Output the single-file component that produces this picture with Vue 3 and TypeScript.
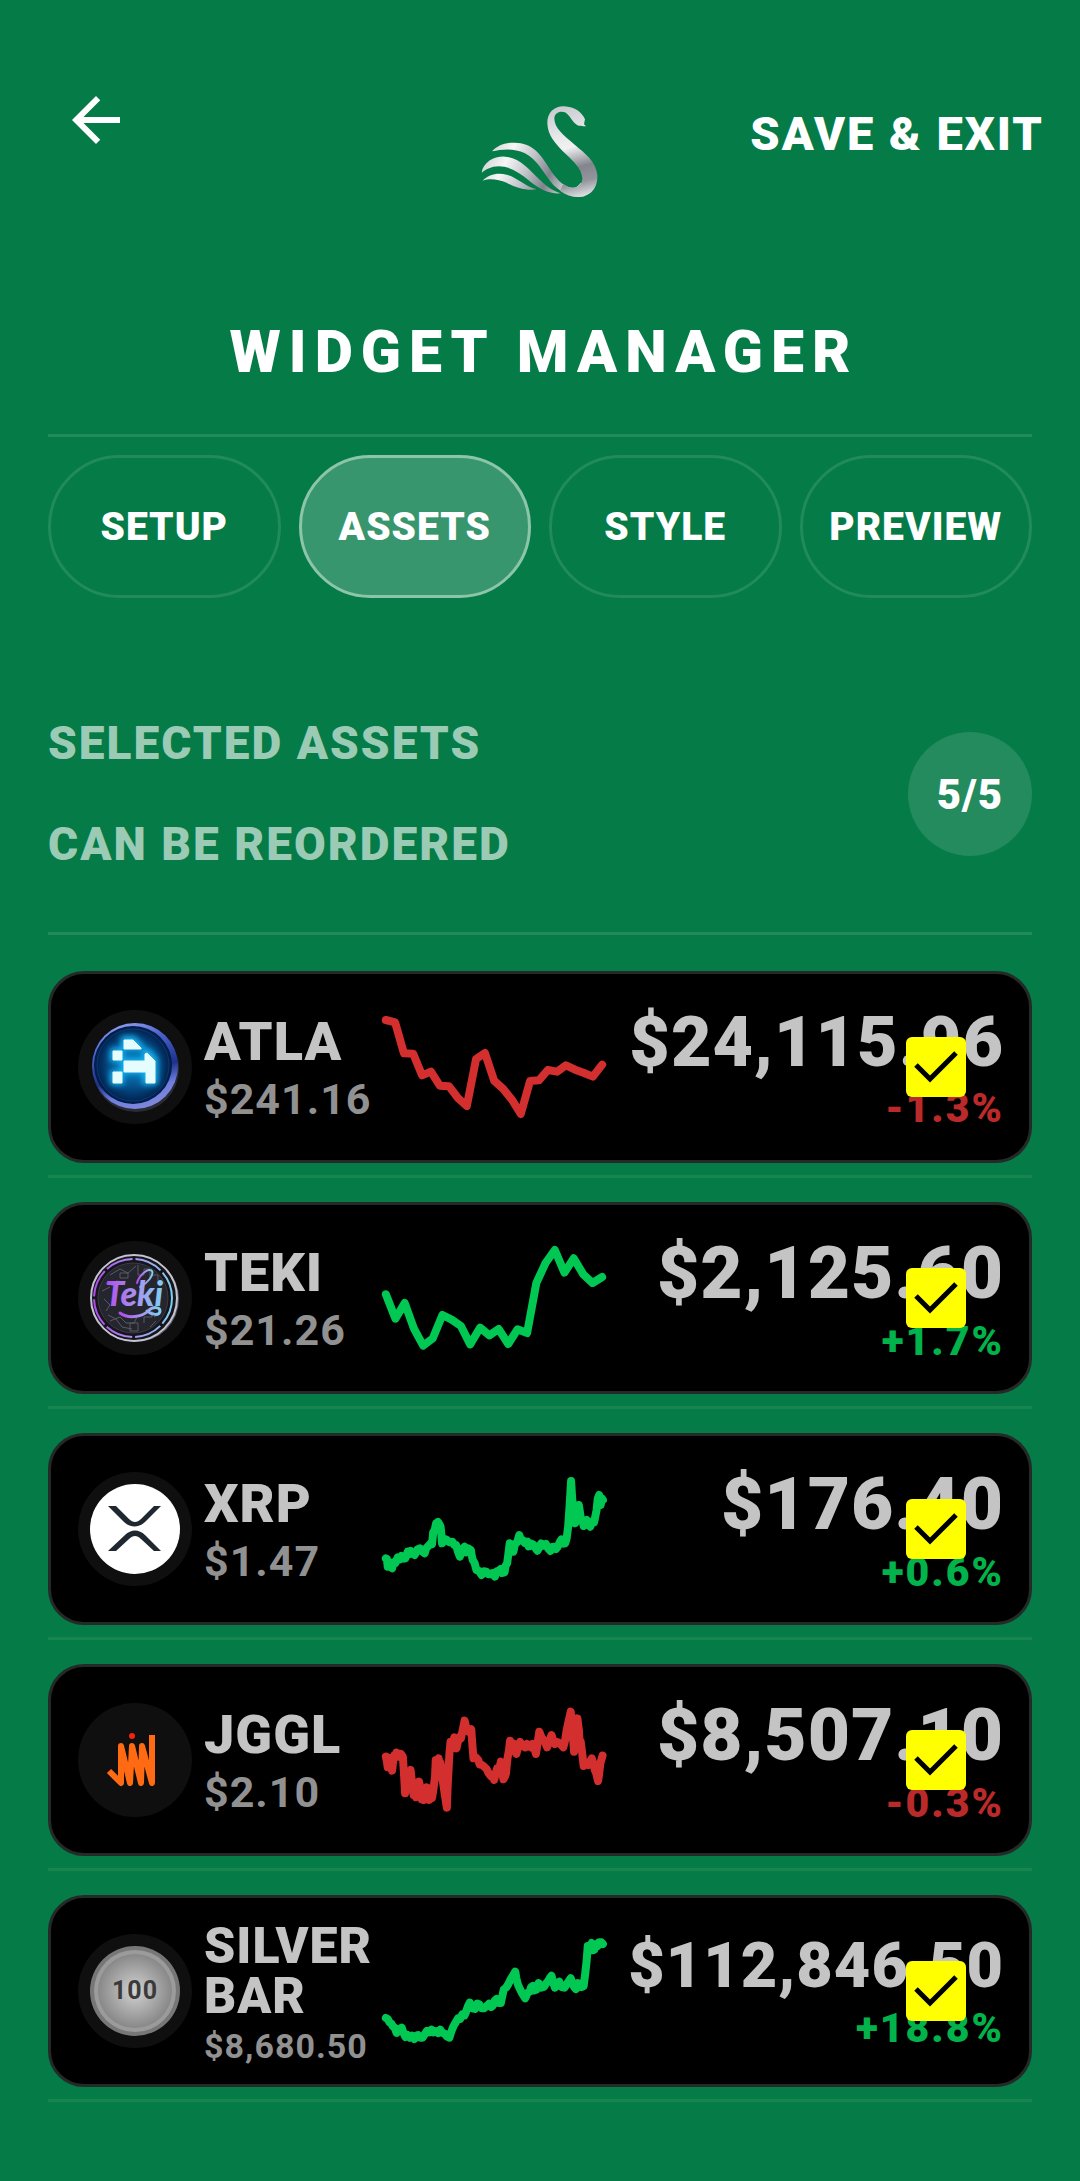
<script setup lang="ts">
import { ref } from 'vue'

type Trend = 'up' | 'down'
type AmountSize = 'regular' | 'wide' | 'long'

interface Asset {
  id: string
  name: string
  price: string
  amount: string
  amountSize: AmountSize
  change: string
  trend: Trend
  compact?: boolean
  selected: boolean
  line: string
}

const tabs = ['SETUP', 'ASSETS', 'STYLE', 'PREVIEW']
const activeTab = ref('ASSETS')

const assets = ref<Asset[]>([
  {
    id: 'atla',
    name: 'ATLA',
    price: '$241.16',
    amount: '$24,115.96',
    amountSize: 'wide',
    change: '-1.3%',
    trend: 'down',
    selected: true,
    line: '5,9 30,16 54,109 79,110 103,175 127,164 151,206 176,208 200,243 224,267 249,126 273,108 298,191 322,215 346,248 370,291 395,192 419,190 443,159 468,164 492,145 517,158 541,168 565,179 590,143',
  },
  {
    id: 'teki',
    name: 'TEKI',
    price: '$21.26',
    amount: '$2,125.60',
    amountSize: 'regular',
    change: '+1.7%',
    trend: 'up',
    selected: true,
    line: '5,139 31,212 56,165 81,242 106,293 132,271 158,201 183,215 208,234 233,289 260,239 285,262 310,243 336,288 361,244 387,255 412,105 437,45 462,6 488,74 513,31 539,79 564,105 590,87',
  },
  {
    id: 'xrp',
    name: 'XRP',
    price: '$1.47',
    amount: '$176.40',
    amountSize: 'regular',
    change: '+0.6%',
    trend: 'up',
    selected: true,
    line: '5,238 8,240 10,263 15,260 22,268 26,250 31,252 37,235 43,241 47,231 54,239 58,238 64,218 68,226 72,216 78,224 83,228 90,212 97,208 102,216 110,223 114,208 120,201 127,192 130,195 133,160 137,153 141,133 146,129 150,136 153,143 155,165 157,193 164,180 170,183 177,190 185,188 190,198 195,198 200,218 205,233 211,212 218,203 222,220 228,208 235,213 237,228 240,243 245,252 250,273 257,276 264,288 270,277 277,278 282,286 288,285 294,282 300,293 305,277 310,275 316,270 320,282 326,280 329,260 333,253 337,220 340,193 345,215 350,218 354,195 360,190 366,168 370,184 375,183 381,192 388,188 391,202 395,201 399,194 405,198 410,208 415,215 420,206 425,193 432,200 438,195 444,208 450,216 455,204 460,203 465,210 470,203 475,190 480,181 486,194 490,193 494,178 498,143 502,80 506,6 509,60 512,90 514,110 517,133 522,100 527,78 530,100 533,123 537,126 540,141 544,128 548,123 553,136 558,143 562,128 568,130 570,121 575,93 578,60 582,48 586,78 589,58 592,63',
  },
  {
    id: 'jggl',
    name: 'JGGL',
    price: '$2.10',
    amount: '$8,507.10',
    amountSize: 'regular',
    change: '-0.3%',
    trend: 'down',
    selected: true,
    line: '5,140 8,155 10,172 13,144 16,144 19,165 22,182 25,150 28,136 31,142 34,128 38,140 42,138 46,132 51,140 54,190 57,250 60,230 64,220 68,190 72,180 76,220 80,255 83,235 87,262 91,240 95,215 99,240 102,268 105,250 108,270 112,256 116,232 119,258 122,270 126,240 130,264 134,235 138,200 140,150 143,165 148,145 150,190 153,160 158,205 164,250 170,293 172,230 175,170 177,130 180,95 184,104 190,82 193,100 196,115 200,95 205,80 208,85 212,65 218,32 222,50 226,62 230,66 236,58 239,105 242,145 248,142 255,150 259,164 265,165 271,170 278,178 283,190 290,200 294,194 298,210 302,190 306,175 311,180 316,155 319,180 323,208 327,200 330,190 332,165 334,145 338,120 341,92 346,110 350,100 354,118 358,132 363,110 368,96 375,108 382,112 387,102 392,105 397,112 402,102 407,116 411,132 416,95 420,65 426,82 432,90 436,98 441,112 447,94 453,75 458,92 462,102 469,96 476,100 480,106 485,112 490,90 494,60 498,40 505,5 509,50 514,125 518,60 523,25 527,60 530,110 532,95 536,130 540,168 546,160 552,165 557,155 562,145 566,160 570,180 574,190 579,213 582,190 585,160 591,137',
  },
  {
    id: 'silver',
    name: 'SILVER BAR',
    price: '$8,680.50',
    amount: '$112,846.50',
    amountSize: 'long',
    change: '+18.8%',
    trend: 'up',
    compact: true,
    selected: true,
    line: '5,231 10,234 15,244 20,248 24,256 29,260 34,276 40,266 48,260 52,274 58,288 64,282 70,290 76,284 82,294 87,284 92,282 98,290 104,290 110,280 116,270 122,274 128,266 134,274 140,270 146,276 152,266 158,276 164,278 170,286 177,290 182,272 188,255 194,244 200,232 206,234 212,220 218,223 222,212 227,196 232,185 239,202 246,204 252,188 258,190 264,202 270,202 277,196 284,188 290,198 294,194 299,180 304,174 310,186 316,186 320,165 324,145 330,140 336,130 342,116 348,105 355,92 358,112 362,130 366,140 374,158 382,172 388,156 394,152 398,138 402,135 406,148 412,146 418,126 425,140 432,138 438,128 444,120 448,112 453,104 457,122 462,140 468,130 474,122 480,138 488,140 494,130 500,120 505,112 510,128 514,138 519,144 524,126 529,128 534,138 540,135 544,100 548,60 551,15 556,20 562,6 565,28 569,26 573,10 577,16 581,4 588,4 592,9',
  },
])
</script>

<template>
  <main class="page">
    <header class="topbar">
      <button class="back" type="button" aria-label="Back">
        <svg viewBox="0 0 24 24" aria-hidden="true">
          <path d="M20 11H7.83l5.59-5.59L12 4l-8 8 8 8 1.41-1.41L7.83 13H20v-2z" fill="#fff" />
        </svg>
      </button>
      <svg class="swan" viewBox="60 45 360 282" aria-hidden="true">
        <defs>
          <linearGradient id="neck" x1="300" y1="50" x2="370" y2="320" gradientUnits="userSpaceOnUse">
            <stop offset="0" stop-color="#c9cace" />
            <stop offset="0.3" stop-color="#e6e7e9" />
            <stop offset="0.45" stop-color="#f2f2f3" />
            <stop offset="0.68" stop-color="#82858d" />
            <stop offset="0.84" stop-color="#94969d" />
            <stop offset="1" stop-color="#e2e3e5" />
          </linearGradient>
          <linearGradient id="wing" x1="80" y1="180" x2="320" y2="300" gradientUnits="userSpaceOnUse">
            <stop offset="0" stop-color="#cfd1d4" />
            <stop offset="0.25" stop-color="#f6f6f7" />
            <stop offset="0.5" stop-color="#c3c5ca" />
            <stop offset="0.75" stop-color="#80838c" />
            <stop offset="1" stop-color="#d8d9dc" />
          </linearGradient>
        </defs>
        <path
          fill="url(#wing)"
          d="M96 184C112 168 132 158 162 158C215 157 242 192 265 230C285 262 308 290 336 293C346 294 356 288 362 278L376 318C340 326 304 308 280 285C252 252 232 208 195 190C160 173 126 178 96 184Z"
        />
        <path
          fill="url(#wing)"
          d="M65 248C70 215 105 198 135 200C178 203 206 237 240 270C262 292 280 303 303 310C270 313 238 298 205 270C175 245 140 222 100 230C85 234 73 240 65 248Z"
        />
        <path
          fill="url(#wing)"
          d="M68 272C85 252 115 247 140 254C175 265 195 290 230 298C200 303 165 292 140 278C115 268 90 264 68 272Z"
        />
        <path
          fill="url(#neck)"
          d="M378 109L372 103L375 88C366 68 345 50 312 49C283 48 261 68 262 100C263 135 285 160 310 185C335 208 366 235 367 265C367 283 352 296 336 293C326 292 318 288 310 281L300 302C316 315 335 321 355 321C395 320 414 290 412 255C408 215 375 190 345 165C310 135 283 115 283 85C284 68 300 62 315 67C330 75 335 95 350 104C358 110 366 107 378 109Z"
        />
      </svg>
      <button class="save" type="button">SAVE &amp; EXIT</button>
    </header>

    <h1 class="title">WIDGET MANAGER</h1>

    <nav class="tabs" aria-label="Widget sections">
      <button
        v-for="tab in tabs"
        :key="tab"
        type="button"
        class="tab"
        :class="{ active: tab === activeTab }"
        @click="activeTab = tab"
      >
        {{ tab }}
      </button>
    </nav>

    <section class="summary">
      <h2 class="hint">SELECTED ASSETS<br />CAN BE REORDERED</h2>
      <span class="count">{{ assets.filter((a) => a.selected).length }}/{{ assets.length }}</span>
    </section>

    <ul class="list">
      <li v-for="asset in assets" :key="asset.id" class="item">
        <article class="card">
          <div class="avatar">
            <svg v-if="asset.id === 'atla'" viewBox="0 0 90 90" aria-hidden="true">
              <defs>
                <linearGradient id="rim" x1="0.3" y1="0" x2="0.6" y2="1">
                  <stop offset="0" stop-color="#93a0f0" />
                  <stop offset="0.25" stop-color="#4a63cf" />
                  <stop offset="0.6" stop-color="#1c318c" />
                  <stop offset="0.8" stop-color="#6e7ee0" />
                  <stop offset="1" stop-color="#8088da" />
                </linearGradient>
                <radialGradient id="face">
                  <stop offset="0" stop-color="#0a8fd0" />
                  <stop offset="0.55" stop-color="#04508c" />
                  <stop offset="1" stop-color="#021a45" />
                </radialGradient>
                <filter id="glow" x="-30%" y="-30%" width="160%" height="160%">
                  <feGaussianBlur stdDeviation="3" />
                </filter>
              </defs>
              <circle cx="46" cy="47" r="43" fill="#2a2b33" />
              <circle cx="45" cy="44" r="43" fill="url(#rim)" />
              <circle cx="43" cy="43" r="39" fill="url(#face)" />
              <circle cx="43" cy="43" r="36" fill="none" stroke="#083a70" stroke-width="1" />
              <g fill="#19b6f5" filter="url(#glow)">
                <path d="M33 16h11l9 10H33zM22 28h10v10H22zM33 39h21v-8l5-2 7 8v24H54V49H33zM22 50h10v11H22z" stroke="#19b6f5" stroke-width="4" />
              </g>
              <path
                fill="#e6fdff"
                stroke="#e6fdff"
                stroke-width="1"
                stroke-linejoin="round"
                d="M34 18h9l8 8v1H34zM23 29h9v9h-9zM34 39h21v-7l2-1 8 8v22h-9V50H34zM23 50h9v11h-9z"
              />
            </svg>
            <svg v-else-if="asset.id === 'teki'" viewBox="0 0 90 90" aria-hidden="true">
              <defs>
                <linearGradient id="neon" x1="0" y1="0" x2="1" y2="0">
                  <stop offset="0" stop-color="#b04bee" />
                  <stop offset="0.5" stop-color="#a990ee" />
                  <stop offset="1" stop-color="#7fd0f2" />
                </linearGradient>
              </defs>
              <circle cx="46" cy="46" r="43" fill="#55565f" />
              <circle cx="44" cy="45" r="43" fill="#15151b" stroke="#c4c3d2" stroke-width="2" />
              <circle cx="43" cy="45" r="39" fill="none" stroke="url(#neon)" stroke-width="2" stroke-dasharray="28 3" />
              <circle cx="43" cy="45" r="35" fill="#25252d" stroke="#3b3b45" stroke-width="1" />
              <g fill="none" stroke="#5a5a66" stroke-width="1">
                <path d="M20 22l10-6 8 4 8-7M18 62l8 4 6 8 10 2M30 20h8v5h-8zM48 12v10h6v-6h6v10M62 22h6v8M14 46l6 6-4 6M20 68l10-4 6 6h8l4-8M54 70v-6h8v-6M40 70v8h8v-8z" />
                <path d="M12 38l8-4M16 30l8 3M26 28l10 1M60 74l6-6M70 60l-6 4" />
              </g>
              <g fill="none" stroke="url(#neon)" stroke-width="3" stroke-linecap="round">
                <path d="M30 60c8 6 22 4 28-2 5-5 12-4 12 0 0 5-8 4-13 0" />
                <path d="M47 30c2-8 12-16 15-12 2 4-4 12-12 16" stroke-width="2" />
              </g>
              <text x="44" y="53" text-anchor="middle" class="logo-script" fill="url(#neon)">Teki</text>
            </svg>
            <svg v-else-if="asset.id === 'xrp'" viewBox="0 0 90 90" aria-hidden="true">
              <circle cx="45" cy="45" r="45" fill="#fff" />
              <path
                fill="#1f2730"
                d="M18 22h8l13 13c4 4 8 4 12 0l13-13h7L55 38c-6 6-15 6-21 0zM18 67l17-16c6-6 14-6 20 0l16 16h-7L51 55c-4-4-8-4-12 0L26 67z"
              />
            </svg>
            <svg v-else-if="asset.id === 'jggl'" viewBox="0 0 90 90" aria-hidden="true">
              <path
                d="M19 56l12 12V31l9 37 2-37 9 37 1-37 10 37V20"
                fill="none"
                stroke="#ff6a13"
                stroke-width="6"
                stroke-linejoin="round"
              />
              <circle cx="42" cy="21" r="3" fill="#f5230b" />
            </svg>
            <svg v-else viewBox="0 0 90 90" aria-hidden="true">
              <defs>
                <radialGradient id="coin">
                  <stop offset="0" stop-color="#d2d2d2" />
                  <stop offset="1" stop-color="#888" />
                </radialGradient>
              </defs>
              <circle cx="45" cy="45" r="45" fill="#777" />
              <circle cx="45" cy="45" r="41" fill="#9b9b9b" />
              <circle cx="45" cy="45" r="37" fill="url(#coin)" />
              <text x="45" y="53" text-anchor="middle" class="coin-text">100</text>
            </svg>
          </div>

          <div class="info" :class="{ compact: asset.compact }">
            <h3 class="name">{{ asset.name }}</h3>
            <span class="price">{{ asset.price }}</span>
          </div>

          <svg class="spark" :class="asset.trend" viewBox="0 0 595 300" preserveAspectRatio="none" aria-hidden="true">
            <polyline :points="asset.line" vector-effect="non-scaling-stroke" />
          </svg>

          <div class="value">
            <span class="amount" :class="asset.amountSize">{{ asset.amount }}</span>
            <span class="change" :class="asset.trend">{{ asset.change }}</span>
          </div>

          <label class="check">
            <input v-model="asset.selected" type="checkbox" :aria-label="`Show ${asset.name}`" />
            <svg v-if="asset.selected" viewBox="0 0 60 60" aria-hidden="true">
              <path d="M10 28l14 14 26-26" fill="none" stroke="#000" stroke-width="5" />
            </svg>
          </label>
        </article>
      </li>
    </ul>
  </main>
</template>

<style>
body {
  background: #057b47;
}
</style>

<style scoped>
.page {
  box-sizing: border-box;
  min-height: 100vh;
  padding-bottom: 78px;
  background: #057b47;
  color: #fff;
  font-family: Roboto, 'Liberation Sans', sans-serif;
  font-weight: 700;
}

button {
  padding: 0;
  border: 0;
  background: none;
  color: inherit;
  font: inherit;
  cursor: pointer;
}

h1,
h2,
h3,
ul {
  margin: 0;
  padding: 0;
  font-weight: 900;
}

.topbar {
  display: grid;
  grid-template-columns: 1fr auto 1fr;
  align-items: start;
  padding: 84px 36px 0 60px;
  height: 222px;
}

.back {
  width: 72px;
  height: 72px;
}

.back svg {
  display: block;
}

.swan {
  width: 120px;
  height: 94px;
  margin: 21px 24px 0 0;
}

.save {
  justify-self: end;
  margin-top: 20px;
  font-size: 47px;
  font-weight: 900;
  line-height: 60px;
  letter-spacing: 2px;
  white-space: nowrap;
}

.title {
  margin: 0 48px;
  padding: 10px 0 46px 8px;
  border-bottom: 3px solid #218b5c;
  font-size: 59px;
  line-height: 72px;
  letter-spacing: 8px;
  text-align: center;
}

.tabs {
  display: grid;
  grid-template-columns: repeat(4, minmax(0, 1fr));
  gap: 18px;
  margin: 18px 48px 0;
}

.tab {
  height: 143px;
  border: 3px solid #218b5c;
  border-radius: 72px;
  font-size: 39px;
  font-weight: 900;
  letter-spacing: 1px;
  white-space: nowrap;
}

.tab.active {
  border-color: #8cc5a9;
  background: #38966e;
}

.summary {
  display: flex;
  align-items: center;
  justify-content: space-between;
  margin: 0 48px;
  padding: 95px 0 37px;
  border-bottom: 3px solid #218b5c;
}

.hint {
  color: #9bcab5;
  font-size: 46px;
  line-height: 101px;
  letter-spacing: 2px;
}

.count {
  display: flex;
  align-items: center;
  justify-content: center;
  width: 124px;
  height: 124px;
  border-radius: 50%;
  background: #238b5e;
  font-size: 42px;
  font-weight: 900;
  letter-spacing: 1px;
}

.list {
  display: flex;
  flex-direction: column;
  gap: 24px;
  margin: 36px 48px 0;
  list-style: none;
}

.item {
  padding-bottom: 12px;
  border-bottom: 3px solid #18854f;
}

.card {
  position: relative;
  box-sizing: border-box;
  display: flex;
  align-items: center;
  height: 192px;
  padding: 0 25px 0 27px;
  border: 3px solid #242a27;
  border-radius: 36px;
  background: #000;
}

.avatar {
  display: flex;
  flex: none;
  align-items: center;
  justify-content: center;
  width: 114px;
  height: 114px;
  border-radius: 50%;
  background: #0f0f0f;
}

.avatar svg {
  width: 90px;
  height: 90px;
}

.logo-script {
  font-family: Lato, sans-serif;
  font-size: 34px;
  font-style: italic;
  font-weight: 900;
}

.coin-text {
  fill: #3a3a3a;
  font-size: 25px;
  font-weight: 700;
  letter-spacing: 1px;
}

.info {
  display: flex;
  flex: none;
  flex-direction: column;
  width: 168px;
  margin: 0 12px;
}

.name {
  color: #c4c4c4;
  font-size: 54px;
  line-height: 64px;
  letter-spacing: 1px;
}

.price {
  color: #919191;
  font-size: 43px;
  font-weight: 700;
  line-height: 50px;
  letter-spacing: 1px;
}

.compact {
  padding-top: 10px;
}

.compact .name {
  font-size: 50px;
  line-height: 50px;
}

.compact .price {
  font-size: 34px;
  line-height: 50px;
}

.spark {
  flex: none;
  width: 220px;
  height: 100px;
  overflow: visible;
}

.spark polyline {
  fill: none;
  stroke-width: 8px;
  stroke-linecap: round;
  stroke-linejoin: round;
}

.spark.up polyline {
  stroke: #00c853;
}

.spark.down polyline {
  stroke: #d32f2f;
}

.value {
  display: flex;
  flex: 1;
  flex-direction: column;
  align-items: flex-end;
  min-width: 0;
}

.amount {
  color: #c4c4c4;
  font-size: 73px;
  line-height: 86px;
  letter-spacing: 1px;
  white-space: nowrap;
}

.amount.wide {
  font-size: 70px;
  line-height: 82px;
}

.amount.long {
  font-size: 63px;
  line-height: 74px;
}

.change {
  font-size: 41px;
  line-height: 50px;
  letter-spacing: 2px;
}

.change.up {
  color: #02b24b;
}

.change.down {
  color: #bb2a2a;
}

.check {
  position: absolute;
  top: 63px;
  right: 63px;
  width: 60px;
  height: 60px;
  cursor: pointer;
}

.check input {
  display: block;
  width: 60px;
  height: 60px;
  margin: 0;
  border-radius: 6px;
  background: #ff0;
  appearance: none;
}

.check svg {
  position: absolute;
  inset: 0;
  pointer-events: none;
}
</style>
